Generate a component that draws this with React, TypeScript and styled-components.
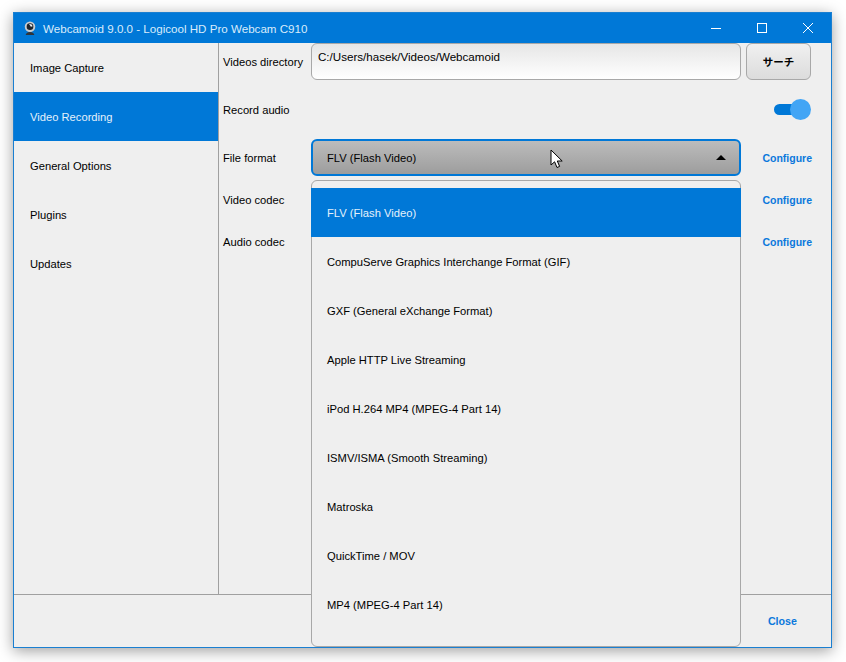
import styled, { createGlobalStyle } from "styled-components";

const GlobalStyle = createGlobalStyle`
  html, body {
    margin: 0;
    padding: 0;
    background: #fff;
    min-height: 100vh;
    overflow: hidden;
  }
  * {
    box-sizing: border-box;
  }
`;

const Window = styled.div`
  width: 819px;
  height: 636px;
  margin: 12px 0 0 13px;
  display: flex;
  flex-direction: column;
  background: #efefef;
  border: 1px solid #1a7fd1;
  box-shadow: 0 3px 14px rgba(0, 0, 0, 0.38);
  font-family: "Liberation Sans", Arial, sans-serif;
  font-size: 11.2px;
  color: #000;
`;

const TitleBar = styled.div`
  height: 30px;
  flex: none;
  display: flex;
  align-items: center;
  padding-left: 9px;
  background: #0078d7;
  color: #d9ecfb;
  font-size: 11.6px;
`;

const TitleText = styled.span`
  margin-left: 6px;
  flex: 1;
`;

const WinButton = styled.button`
  width: 46px;
  height: 30px;
  padding: 0;
  border: 0;
  background: transparent;
  display: flex;
  align-items: center;
  justify-content: center;
`;

const Body = styled.div`
  flex: 1;
  min-height: 0;
  display: flex;
`;

const SideBar = styled.div`
  width: 205px;
  flex: none;
  border-right: 1px solid #a0a0a0;
`;

const SideItem = styled.div<{ $active?: boolean }>`
  height: 49px;
  display: flex;
  align-items: center;
  padding-left: 16px;
  background: ${(props) => (props.$active ? "#0078d7" : "transparent")};
  color: ${(props) => (props.$active ? "#e4f1fb" : "#000")};
`;

const Form = styled.div`
  flex: 1;
  padding-left: 4px;
  display: grid;
  grid-template-columns: 83px 430px 65px;
  grid-template-rows: 37px 49px 37px 37px 37px;
  gap: 5px;
  align-content: start;
`;

const Label = styled.div`
  display: flex;
  align-items: center;
  white-space: nowrap;
`;

const PathInput = styled.div`
  border: 1px solid #a8a8a8;
  border-radius: 6px;
  background: linear-gradient(#e6e6e6, #ffffff);
  padding: 6px 6px;
  font-size: 11.6px;
`;

const BrowseButton = styled.button`
  border: 1px solid #a8a8a8;
  border-radius: 6px;
  background: linear-gradient(#f0f0f0, #dcdcdc);
  padding: 0;
  font-family: "Noto Sans CJK JP", sans-serif;
  font-size: 10.5px;
  font-weight: 700;
  color: #000;
`;

const ToggleCell = styled.div`
  grid-column: 2 / 4;
  display: flex;
  align-items: center;
  justify-content: flex-end;
`;

const Toggle = styled.div`
  position: relative;
  width: 37px;
  height: 21px;
`;

const ToggleTrack = styled.div`
  position: absolute;
  left: 0;
  top: 5px;
  width: 28px;
  height: 11px;
  border-radius: 6px;
  background: #0078d7;
`;

const ToggleKnob = styled.div`
  position: absolute;
  right: 0;
  top: 0;
  width: 21px;
  height: 21px;
  border-radius: 50%;
  background: #42a5f5;
`;

const ComboCell = styled.div`
  position: relative;
`;

const Combo = styled.div`
  height: 37px;
  display: flex;
  align-items: center;
  justify-content: space-between;
  padding: 0 13px 0 14px;
  border: 2px solid #0078d7;
  border-radius: 6px;
  background: linear-gradient(#bcbcbc, #9d9d9d);
`;

const ArrowUp = styled.div`
  width: 0;
  height: 0;
  border-left: 5px solid transparent;
  border-right: 5px solid transparent;
  border-bottom: 5px solid #000;
`;

const Pointer = styled.svg`
  position: absolute;
  left: 239px;
  top: 10px;
`;

const Popup = styled.div`
  position: absolute;
  z-index: 2;
  left: 0;
  right: 0;
  top: 41px;
  height: 467px;
  padding-top: 7px;
  background: #efefef;
  border: 1px solid #a8a8a8;
  border-radius: 6px;
`;

const PopupItem = styled.div<{ $active?: boolean }>`
  height: 49px;
  margin: 0 -1px;
  display: flex;
  align-items: center;
  padding-left: 16px;
  background: ${(props) => (props.$active ? "#0078d7" : "transparent")};
  color: ${(props) => (props.$active ? "#e4f1fb" : "#000")};
`;

const LinkCell = styled.div`
  display: flex;
  align-items: center;
  justify-content: flex-end;
  font-weight: 700;
  font-size: 10.5px;
  color: #0b78dc;
  white-space: nowrap;
  margin-right: -1px;
`;

const Footer = styled.div`
  height: 53px;
  flex: none;
  display: flex;
  align-items: center;
  justify-content: flex-end;
  padding-right: 34px;
  border-top: 1px solid #a0a0a0;
  font-weight: 700;
  font-size: 10.7px;
  color: #0b78dc;
`;

const sections = ["Image Capture", "Video Recording", "General Options", "Plugins", "Updates"];

const formats = [
  "FLV (Flash Video)",
  "CompuServe Graphics Interchange Format (GIF)",
  "GXF (General eXchange Format)",
  "Apple HTTP Live Streaming",
  "iPod H.264 MP4 (MPEG-4 Part 14)",
  "ISMV/ISMA (Smooth Streaming)",
  "Matroska",
  "QuickTime / MOV",
  "MP4 (MPEG-4 Part 14)",
];

const AppIcon = () => (
  <svg width="14" height="14" viewBox="0 0 16 16">
    <circle cx="8" cy="6.5" r="6" fill="#c9ccd0" />
    <circle cx="8" cy="6.5" r="3.8" fill="#20242a" />
    <path d="M7 3.5a3.5 3.5 0 0 1 4 2.5l-2 .5z" fill="#eef2f6" />
    <path d="M3 16c.5-2.5 2.5-3.5 5-3.5s4.5 1 5 3.5z" fill="#30343a" />
  </svg>
);

const App = () => {
  return (
    <>
      <GlobalStyle />
      <Window>
        <TitleBar>
          <AppIcon />
          <TitleText>Webcamoid 9.0.0 - Logicool HD Pro Webcam C910</TitleText>
          <WinButton>
            <svg width="10" height="10" viewBox="0 0 10 10">
              <path d="M0 5.5h10" stroke="#fff" strokeWidth="1" />
            </svg>
          </WinButton>
          <WinButton>
            <svg width="10" height="10" viewBox="0 0 10 10">
              <rect x="0.5" y="0.5" width="9" height="9" fill="none" stroke="#fff" />
            </svg>
          </WinButton>
          <WinButton>
            <svg width="10" height="10" viewBox="0 0 10 10">
              <path d="M0 0l10 10M10 0L0 10" stroke="#fff" strokeWidth="1" />
            </svg>
          </WinButton>
        </TitleBar>
        <Body>
          <SideBar>
            {sections.map((name) => (
              <SideItem key={name} $active={name === "Video Recording"}>
                {name}
              </SideItem>
            ))}
          </SideBar>
          <Form>
            <Label>Videos directory</Label>
            <PathInput>C:/Users/hasek/Videos/Webcamoid</PathInput>
            <BrowseButton>サーチ</BrowseButton>

            <Label>Record audio</Label>
            <ToggleCell>
              <Toggle>
                <ToggleTrack />
                <ToggleKnob />
              </Toggle>
            </ToggleCell>

            <Label>File format</Label>
            <ComboCell>
              <Combo>
                FLV (Flash Video)
                <ArrowUp />
              </Combo>
              <Pointer width="14" height="20" viewBox="0 0 14 20">
                <path
                  d="M1 1v15l3.6-3.2L7 18.5l2.6-1.1-2.3-5.4h4.9z"
                  fill="#fff"
                  stroke="#000"
                  strokeWidth="1"
                  strokeLinejoin="round"
                />
              </Pointer>
              <Popup>
                {formats.map((name, i) => (
                  <PopupItem key={name} $active={i === 0}>
                    {name}
                  </PopupItem>
                ))}
              </Popup>
            </ComboCell>
            <LinkCell>Configure</LinkCell>

            <Label>Video codec</Label>
            <div />
            <LinkCell>Configure</LinkCell>

            <Label>Audio codec</Label>
            <div />
            <LinkCell>Configure</LinkCell>
          </Form>
        </Body>
        <Footer>Close</Footer>
      </Window>
    </>
  );
};

export default App;
